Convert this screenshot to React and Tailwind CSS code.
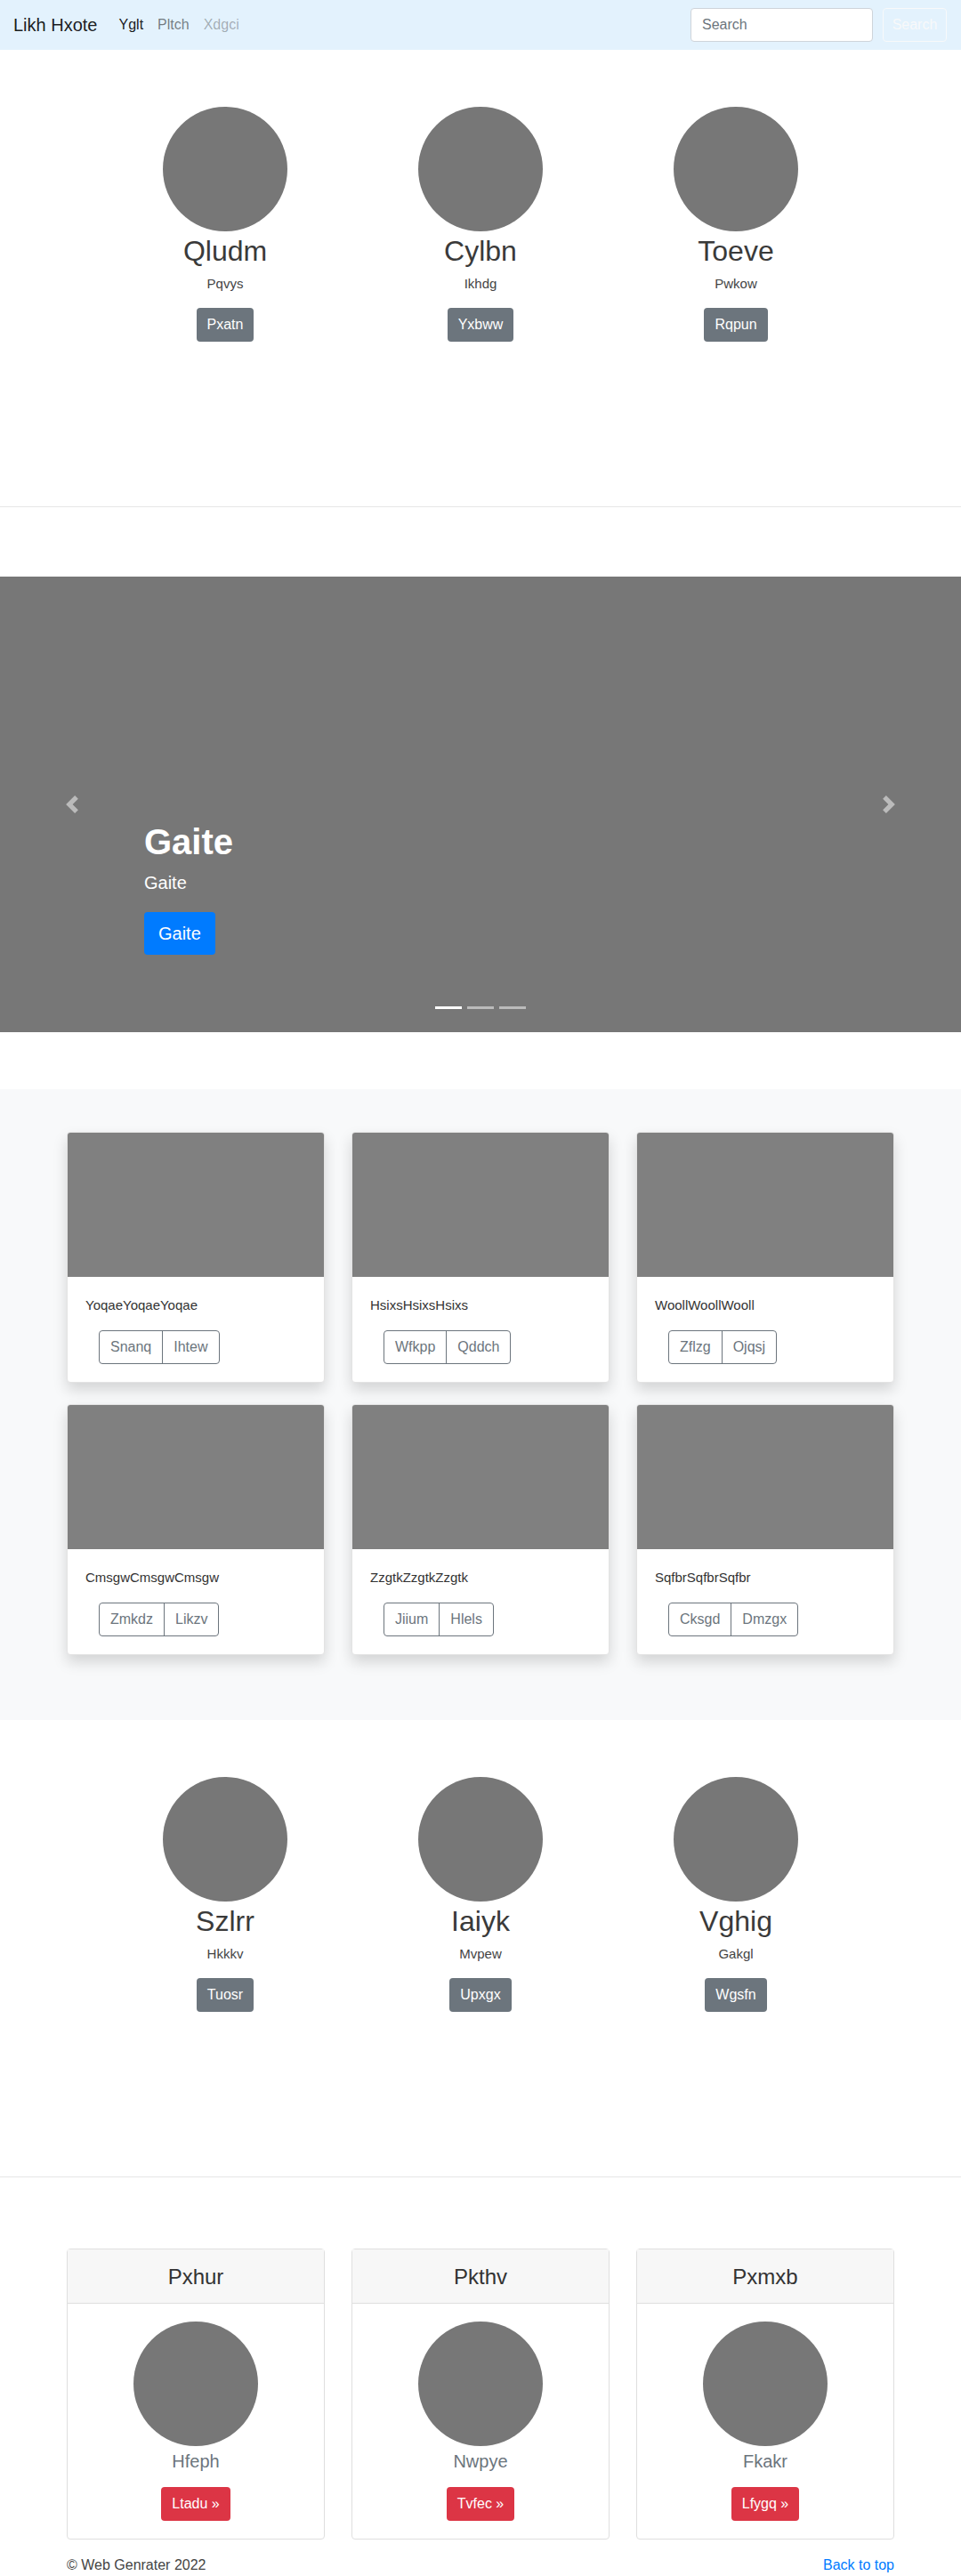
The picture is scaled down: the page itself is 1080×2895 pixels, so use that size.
import React from "react";

function Circle() {
  return <div className="w-[140px] h-[140px] rounded-full bg-[#777777]" />;
}

function Marketing({ items }) {
  return (
    <div className="h-[513px] pt-16">
      <div className="w-[861px] mx-auto grid grid-cols-3">
        {items.map((it) => (
          <div key={it.t} className="flex flex-col items-center">
            <Circle />
            <h2 className="mt-[3px] text-[32px] leading-[38px] text-[#3a3a3a]">{it.t}</h2>
            <p className="mt-[6px] text-[15px] leading-6 text-[#444]">{it.s}</p>
            <button className="mt-[15px] h-[38px] px-3 rounded bg-[#6c757d] text-white text-[16px] leading-6">
              {it.b}
            </button>
          </div>
        ))}
      </div>
    </div>
  );
}

function Chevron({ dir }) {
  return (
    <svg width="20" height="20" viewBox="0 0 8 8" className="opacity-50">
      {dir === "left" ? (
        <path fill="#fff" d="M5.25 0l-4 4 4 4 1.5-1.5L4.25 4l2.5-2.5L5.25 0z" />
      ) : (
        <path fill="#fff" d="M2.75 0l-1.5 1.5L3.75 4l-2.5 2.5L2.75 8l4-4-4-4z" />
      )}
    </svg>
  );
}

function AlbumCard({ text, a, b }) {
  return (
    <div className="bg-white border border-[#e3e3e3] rounded shadow-[0_8px_16px_rgba(0,0,0,0.15)] overflow-hidden">
      <div className="h-[162px] bg-[#808080]" />
      <div className="p-5">
        <p className="text-[15px] leading-6 text-[#333]">{text}</p>
        <div className="mt-4 ml-[15px] inline-flex h-[38px] border border-[#6c757d] rounded text-[#6c757d] text-[16px]">
          <button className="px-3 leading-6">{a}</button>
          <button className="px-3 leading-6 border-l border-[#6c757d]">{b}</button>
        </div>
      </div>
    </div>
  );
}

function PriceCard({ head, name, btn }) {
  return (
    <div className="border border-[#dfdfdf] rounded bg-white">
      <div className="h-[61px] flex items-center justify-center bg-[#f7f7f7] border-b border-[#dfdfdf]">
        <h4 className="text-[24px] leading-[29px] text-[#333]">{head}</h4>
      </div>
      <div className="pt-5 pb-5 flex flex-col items-center">
        <Circle />
        <p className="mt-[5px] text-[20px] leading-6 text-[#6c757d]">{name}</p>
        <button className="mt-[17px] h-[38px] px-3 rounded bg-[#dc3545] text-white text-[16px] leading-6">
          {btn}
        </button>
      </div>
    </div>
  );
}

export default function App() {
  return (
    <div className="w-full bg-white font-['Liberation_Sans',Arial,sans-serif] text-[#212529]">
      {/* Navbar */}
      <nav className="h-14 bg-[#e3f2fd] flex items-center justify-between px-4">
        <div className="flex items-center">
          <span className="text-[20px] leading-[30px] text-black/90 mr-4 -ml-px">Likh Hxote</span>
          <a className="px-2 text-[16px] text-black/90">Yglt</a>
          <a className="px-2 text-[16px] text-black/50">Pltch</a>
          <a className="px-2 text-[16px] text-black/30">Xdgci</a>
        </div>
        <div className="flex items-center">
          <div className="w-[205px] h-[38px] bg-white border border-[#ced4da] rounded px-3 flex items-center text-[16px] text-[#6c757d]">
            Search
          </div>
          <button className="ml-[11px] w-[72px] h-[38px] border border-[#f8f9fa] rounded text-[#f8f9fa] text-[16px]">
            Search
          </button>
        </div>
      </nav>

      <Marketing
        items={[
          { t: "Qludm", s: "Pqvys", b: "Pxatn" },
          { t: "Cylbn", s: "Ikhdg", b: "Yxbww" },
          { t: "Toeve", s: "Pwkow", b: "Rqpun" },
        ]}
      />
      <hr className="border-0 h-px bg-[#e6e6e6]" />
      <div className="h-[78px]" />

      {/* Carousel */}
      <div className="relative h-[512px] bg-[#777777]">
        <div className="absolute left-0 top-0 bottom-0 w-[15%] flex items-center justify-center">
          <Chevron dir="left" />
        </div>
        <div className="absolute right-0 top-0 bottom-0 w-[15%] flex items-center justify-center">
          <Chevron dir="right" />
        </div>
        <div className="absolute left-[15%] right-[15%] bottom-[48px] pb-[20px] text-white">
          <h1 className="text-[40px] leading-[48px] font-bold">Gaite</h1>
          <p className="mt-[7px] text-[20px] leading-[30px]">Gaite</p>
          <p className="mt-[18px] mb-[19px]">
            <button className="h-[48px] px-4 rounded bg-[#007bff] text-white text-[20px] leading-[30px]">
              Gaite
            </button>
          </p>
        </div>
        <div className="absolute left-0 right-0 bottom-[26px] flex justify-center gap-[6px]">
          <span className="w-[30px] h-[3px] bg-white" />
          <span className="w-[30px] h-[3px] bg-white/50" />
          <span className="w-[30px] h-[3px] bg-white/50" />
        </div>
      </div>
      <div className="h-16" />

      {/* Album */}
      <div className="bg-[#f8f9fa] pt-12 pb-[73px]">
        <div className="w-[960px] mx-auto px-[15px] grid grid-cols-3 gap-x-[30px] gap-y-[24px]">
          <AlbumCard text="YoqaeYoqaeYoqae" a="Snanq" b="Ihtew" />
          <AlbumCard text="HsixsHsixsHsixs" a="Wfkpp" b="Qddch" />
          <AlbumCard text="WoollWoollWooll" a="Zflzg" b="Ojqsj" />
          <AlbumCard text="CmsgwCmsgwCmsgw" a="Zmkdz" b="Likzv" />
          <AlbumCard text="ZzgtkZzgtkZzgtk" a="Jiium" b="Hlels" />
          <AlbumCard text="SqfbrSqfbrSqfbr" a="Cksgd" b="Dmzgx" />
        </div>
      </div>

      <Marketing
        items={[
          { t: "Szlrr", s: "Hkkkv", b: "Tuosr" },
          { t: "Iaiyk", s: "Mvpew", b: "Upxgx" },
          { t: "Vghig", s: "Gakgl", b: "Wgsfn" },
        ]}
      />
      <hr className="border-0 h-px bg-[#e6e6e6]" />
      <div className="h-[80px]" />

      {/* Pricing-like cards */}
      <div className="w-[960px] mx-auto px-[15px] grid grid-cols-3 gap-x-[30px]">
        <PriceCard head="Pxhur" name="Hfeph" btn="Ltadu »" />
        <PriceCard head="Pkthv" name="Nwpye" btn="Tvfec »" />
        <PriceCard head="Pxmxb" name="Fkakr" btn="Lfygq »" />
      </div>

      {/* Footer */}
      <footer className="w-[960px] mx-auto px-[15px] pt-[17px] flex justify-between text-[16px] leading-6">
        <p className="text-[#444]">© Web Genrater 2022</p>
        <a className="text-[#007bff]">Back to top</a>
      </footer>
    </div>
  );
}
